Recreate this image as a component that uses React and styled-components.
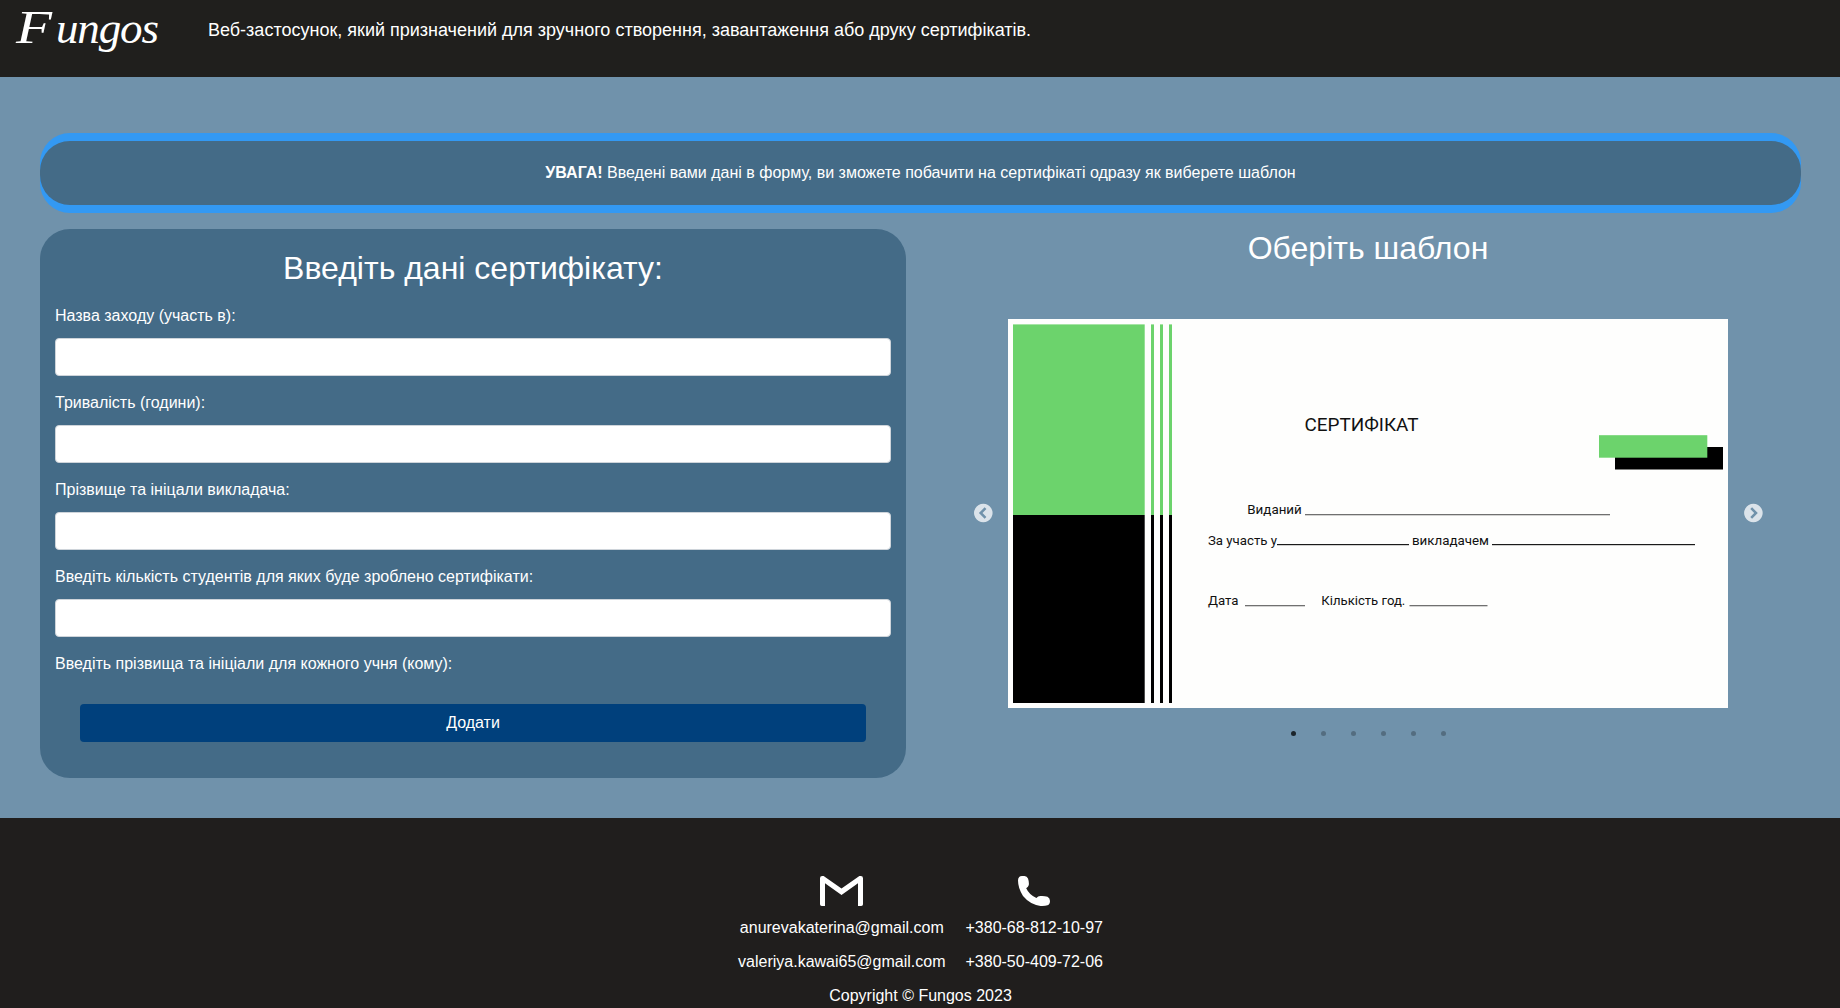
import React from "react";
import styled, { createGlobalStyle } from "styled-components";

const GlobalStyle = createGlobalStyle`
  *, *::before, *::after { box-sizing: border-box; }
  html, body { margin: 0; padding: 0; overflow: hidden; }
  body {
    background: #7092ab;
    color: #fff;
    font-family: "Liberation Sans", Arial, sans-serif;
    font-size: 16px;
    line-height: 24px;
  }
`;

const Page = styled.div`
  display: flex;
  flex-direction: column;
  height: 1008px;
`;

const Header = styled.header`
  display: flex;
  height: 77px;
  background: #201f1d;
`;

const Logo = styled.svg`
  flex: none;
  width: 208px;
  height: 77px;
`;

const Tagline = styled.p`
  margin: 17px 0 0;
  font-size: 18px;
  line-height: 27px;
`;

const Main = styled.main`
  display: flex;
  flex-direction: column;
  gap: 24px;
  height: 741px;
  padding: 64px 39px 0 40px;
`;

const Notice = styled.div`
  height: 64px;
  padding: 20px;
  border-radius: 30px;
  background: #446b87;
  box-shadow: 0 -8px 0 #3399f3, 0 8px 0 #3399f3;
  text-align: center;
`;

const Columns = styled.div`
  display: grid;
  grid-template-columns: 866px 866px;
  justify-content: space-between;
  align-items: start;
`;

const FormCard = styled.form`
  display: flex;
  flex-direction: column;
  height: 549px;
  padding: 20px 15px 36px;
  border-radius: 30px;
  background: #446b87;
`;

const Title = styled.h2`
  margin: 0;
  font-size: 32px;
  font-weight: 400;
  line-height: 38px;
  text-align: center;
`;

const Fields = styled.div`
  display: flex;
  flex-direction: column;
  gap: 15px;
  margin-top: 17px;
`;

const Field = styled.label`
  display: flex;
  flex-direction: column;
  gap: 10px;
`;

const Input = styled.input`
  width: 100%;
  height: 38px;
  padding: 6px 12px;
  border: 1px solid #ced4da;
  border-radius: 4px;
  background: #fff;
  font: inherit;
`;

const AddButton = styled.button`
  height: 38px;
  margin: 28px 25px 0;
  border: 0;
  border-radius: 4px;
  background: #00407c;
  color: #fff;
  font: inherit;
`;

const Templates = styled.section`
  display: flex;
  flex-direction: column;
  align-items: center;
`;

const Carousel = styled.div`
  display: flex;
  align-items: center;
  gap: 15px;
  margin-top: 52px;
`;

const Arrow = styled.button`
  width: 20px;
  height: 20px;
  margin-bottom: 2px;
  padding: 0;
  border: 0;
  background: transparent;
  line-height: 0;
  opacity: 0.75;
  transform: ${(p) => (p.$next ? "scaleX(-1)" : "none")};
`;

const Certificate = styled.svg`
  display: block;
  width: 720px;
  height: 389px;
  font-family: Roboto, sans-serif;
  font-size: 13px;
`;

const Dots = styled.div`
  display: flex;
  gap: 25px;
  margin-top: 23px;
  padding-left: 1px;
`;

const Dot = styled.span`
  width: 5px;
  height: 5px;
  border-radius: 50%;
  background: #000;
  opacity: ${(p) => (p.$active ? 0.75 : 0.25)};
`;

const Footer = styled.footer`
  display: flex;
  flex-direction: column;
  align-items: center;
  gap: 10px;
  height: 190px;
  padding: 58px 0 0 1px;
  background: #201e1d;
`;

const Contacts = styled.div`
  display: flex;
  gap: 20px;
`;

const ContactColumn = styled.div`
  display: flex;
  flex-direction: column;
  align-items: center;
  gap: 10px;
`;

const ContactIcon = styled.svg`
  display: block;
  height: 30px;
`;

const fields = [
  "Назва заходу (участь в):",
  "Тривалість (години):",
  "Прізвище та ініцали викладача:",
  "Введіть кількість студентів для яких буде зроблено сертифікати:",
];

function ArrowIcon({ shift }) {
  return (
    <svg width="20" height="20" viewBox={`${shift} 0 20 20`}>
      <path
        fill="#fff"
        fillRule="evenodd"
        d="M10.3 .8a9.3 9.2 0 1 0 .01 0zM11.6 4.3l1.8 1.7-3.9 4 3.9 4-1.8 1.7-5.7-5.7z"
      />
    </svg>
  );
}

function CertificatePreview() {
  return (
    <Certificate viewBox="0 0 720 389">
      <rect width="720" height="389" fill="#fefefd" />
      <g fill="#6cd36c">
        <rect x="5" y="5.4" width="131.7" height="190.6" />
        <rect x="143" y="5.4" width="3" height="190.6" />
        <rect x="152" y="5.4" width="3" height="190.6" />
        <rect x="161" y="5.4" width="3" height="190.6" />
      </g>
      <g fill="#000">
        <rect x="5" y="196" width="131.7" height="188" />
        <rect x="143" y="196" width="3" height="188" />
        <rect x="152" y="196" width="3" height="188" />
        <rect x="161" y="196" width="3" height="188" />
        <rect x="607" y="128" width="108" height="22.5" />
      </g>
      <rect x="591" y="116.2" width="108.3" height="22.5" fill="#6cd36c" />
      <g fill="#111">
        <text x="296.5" y="112.3" fontSize="19" textLength="114" lengthAdjust="spacingAndGlyphs">СЕРТИФІКАТ</text>
        <text x="239.3" y="195" textLength="54.5" lengthAdjust="spacingAndGlyphs">Виданий</text>
        <text x="200" y="226" textLength="69" lengthAdjust="spacingAndGlyphs">За участь у</text>
        <text x="404" y="226" textLength="77" lengthAdjust="spacingAndGlyphs">викладачем</text>
        <text x="200" y="286.3" textLength="30.5" lengthAdjust="spacingAndGlyphs">Дата</text>
        <text x="313.3" y="286.3" textLength="84" lengthAdjust="spacingAndGlyphs">Кількість год.</text>
      </g>
      <g fill="#707070">
        <rect x="297" y="195" width="305" height="1.3" />
        <rect x="237" y="286" width="60" height="1.3" />
        <rect x="401.5" y="286" width="78" height="1.3" />
      </g>
      <g fill="#1a1a1a">
        <rect x="269" y="225" width="132" height="1.2" />
        <rect x="484" y="225" width="203" height="1.2" />
      </g>
    </Certificate>
  );
}

export default function App() {
  return (
    <Page>
      <GlobalStyle />
      <Header>
        <Logo viewBox="0 0 208 77" fill="#fff" fontFamily="Liberation Serif, serif" fontStyle="italic">
          <text x="16" y="43" fontSize="46" textLength="36" lengthAdjust="spacingAndGlyphs">F</text>
          <text x="56" y="43" fontSize="45" textLength="103" lengthAdjust="spacing">ungos</text>
        </Logo>
        <Tagline>Веб-застосунок, який призначений для зручного створення, завантаження або друку сертифікатів.</Tagline>
      </Header>
      <Main>
        <Notice>
          <b>УВАГА!</b> Введені вами дані в форму, ви зможете побачити на сертифікаті одразу як виберете шаблон
        </Notice>
        <Columns>
          <FormCard>
            <Title>Введіть дані сертифікату:</Title>
            <Fields>
              {fields.map((label) => (
                <Field key={label}>
                  {label}
                  <Input />
                </Field>
              ))}
              <Field as="div">Введіть прізвища та ініціали для кожного учня (кому):</Field>
            </Fields>
            <AddButton type="button">Додати</AddButton>
          </FormCard>
          <Templates>
            <Title>Оберіть шаблон</Title>
            <Carousel>
              <Arrow aria-label="Назад">
                <ArrowIcon shift={0} />
              </Arrow>
              <CertificatePreview />
              <Arrow $next aria-label="Далі">
                <ArrowIcon shift={0.7} />
              </Arrow>
            </Carousel>
            <Dots>
              {[0, 1, 2, 3, 4, 5].map((i) => (
                <Dot key={i} $active={i === 0} />
              ))}
            </Dots>
          </Templates>
        </Columns>
      </Main>
      <Footer>
        <Contacts>
          <ContactColumn>
            <ContactIcon width="43" viewBox="0 0 43 30">
              <path
                fill="#fff"
                d="M0 2.2Q0 0 2.2 0H3.6L21.5 12.6 39.4 0H40.8Q43 0 43 2.2V28.2Q43 30 41.2 30H38V7.2L21.5 19 5 7.2V30H1.8Q0 30 0 28.2z"
              />
            </ContactIcon>
            <span>anurevakaterina@gmail.com</span>
            <span>valeriya.kawai65@gmail.com</span>
          </ContactColumn>
          <ContactColumn>
            <ContactIcon width="32" viewBox="0 0 32 30">
              <path
                fill="#fff"
                d="M1.2 1Q2 0 4 0H6.5Q9 0 10 2.5Q11.2 6 10.8 9Q10.4 11 8.2 12.2Q11 18.5 18.4 22Q20 20.2 22.2 20Q26 19.6 29.5 20.8Q32 22 32 25Q32 28.5 29.5 29.3Q27 30.1 22.5 29.9Q12 28.5 5 20Q0 12 0 4.5Q0 2 1.2 1z"
              />
            </ContactIcon>
            <span>+380-68-812-10-97</span>
            <span>+380-50-409-72-06</span>
          </ContactColumn>
        </Contacts>
        <span>Copyright © Fungos 2023</span>
      </Footer>
    </Page>
  );
}
